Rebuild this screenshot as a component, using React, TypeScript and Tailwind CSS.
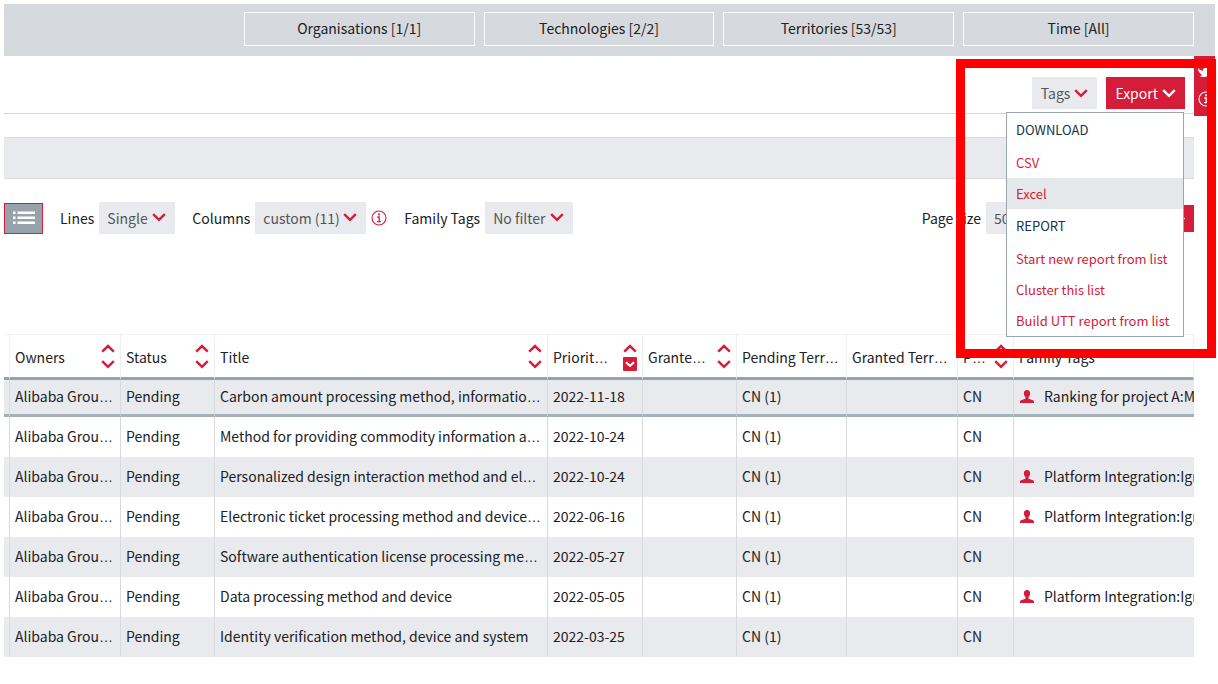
import type { ReactNode } from "react";
import { clsx } from "clsx";

const filters = ["Organisations [1/1]", "Technologies [2/2]", "Territories [53/53]", "Time [All]"];

const menuGroups = [
  { title: "DOWNLOAD", items: ["CSV", "Excel"] },
  { title: "REPORT", items: ["Start new report from list", "Cluster this list", "Build UTT report from list"] },
];

type Sort = "none" | "both" | "desc";

const columns: { label: string; width: string; sort: Sort }[] = [
  { label: "Owners", width: "w-[111px]", sort: "both" },
  { label: "Status", width: "w-[94px]", sort: "both" },
  { label: "Title", width: "", sort: "both" },
  { label: "Priorit…", width: "w-[95px]", sort: "desc" },
  { label: "Grante…", width: "w-[94px]", sort: "both" },
  { label: "Pending Terr…", width: "w-[110px]", sort: "none" },
  { label: "Granted Terr…", width: "w-[111px]", sort: "none" },
  { label: "P…", width: "w-[56px]", sort: "both" },
  { label: "Family Tags", width: "w-[180px]", sort: "none" },
];

const patents = [
  { title: "Carbon amount processing method, informatio…", date: "2022-11-18", tag: "Ranking for project A:M" },
  { title: "Method for providing commodity information a…", date: "2022-10-24", tag: "" },
  { title: "Personalized design interaction method and el…", date: "2022-10-24", tag: "Platform Integration:Ign" },
  { title: "Electronic ticket processing method and device…", date: "2022-06-16", tag: "Platform Integration:Ign" },
  { title: "Software authentication license processing me…", date: "2022-05-27", tag: "" },
  { title: "Data processing method and device", date: "2022-05-05", tag: "Platform Integration:Ign" },
  { title: "Identity verification method, device and system", date: "2022-03-25", tag: "" },
];

// The CJK face centres its ellipsis, so the dots are set in a Latin face
function ShortText({ text }: { text: string }) {
  if (!text.endsWith("…")) return <>{text}</>;
  return (
    <>
      {text.slice(0, -1)}
      <span className="font-['Liberation_Sans',sans-serif]">…</span>
    </>
  );
}

function Chevron({ className }: { className?: string }) {
  return (
    <svg viewBox="0 0 14 9" className={clsx("h-[9px] w-[14px]", className)} fill="none" stroke="currentColor" strokeWidth="2.4" aria-hidden>
      <path d="M1.2 1.2 7 6.900l5.800-5.700" />
    </svg>
  );
}

function InfoIcon({ className }: { className?: string }) {
  return (
    <svg viewBox="0 0 16 16" className={clsx("h-4 w-4 shrink-0", className)} fill="none" stroke="currentColor" aria-hidden>
      <circle cx="8" cy="8" r="7" strokeWidth="1.1" />
      <circle cx="8" cy="4.3" r="1.1" fill="currentColor" stroke="none" />
      <path d="M6.3 7h1.900v4.600M6.100 11.700h4" strokeWidth="1.3" />
    </svg>
  );
}

function PersonIcon() {
  return (
    <svg viewBox="0 0 14 13" className="h-[13px] w-[14px] shrink-0 text-[#d51c38]" fill="currentColor" aria-hidden>
      <path d="M7 0c2.1 0 3.2 1.5 3.1 3.4C10 5.2 9.3 6.3 8.5 7v1.2c.2.7 1 1 2.300 1.400 1.900.5 3.200.9 3.200 2.400v1H0v-1c0-1.500 1.300-1.900 3.200-2.400C4.500 9.200 5.300 8.900 5.500 8.200V7C4.700 6.300 4 5.200 3.900 3.400 3.800 1.500 4.900 0 7 0Z" />
    </svg>
  );
}

function SortIcon({ sort }: { sort: Sort }) {
  return (
    <svg viewBox="0 0 14 27" className="h-[27px] w-[14px] text-[#d51c38]" fill="none" stroke="currentColor" strokeWidth="2.5" aria-hidden>
      <path d="M1.2 7.600 7 2l5.800 5.600" />
      {sort === "desc" ? (
        <>
          <rect x="0" y="13" width="14" height="14" rx="1" fill="currentColor" stroke="none" />
          <path d="M3 18.200l4 3.600 4-3.600" stroke="white" strokeWidth="2.2" />
        </>
      ) : (
        <path d="M1.2 17.200 7 22.800l5.800-5.600" />
      )}
    </svg>
  );
}

function SelectField({ id, label, value, width }: { id: string; label: string; value: string; width: string }) {
  return (
    <div className="flex items-center gap-[5px]">
      <label htmlFor={id} className="whitespace-nowrap">{label}</label>
      <div className="relative">
        <select id={id} className={clsx("h-8 appearance-none bg-[#e9eaee] pl-2 text-[#555]", width)}>
          <option>{value}</option>
        </select>
        <Chevron className="pointer-events-none absolute top-[11px] right-[9px] text-[#d51c38]" />
      </div>
    </div>
  );
}

function Cell({ children }: { children?: ReactNode }) {
  return (
    <td className="overflow-hidden border-r border-[#d9dbe0] px-[5px] pb-0.5 whitespace-nowrap last:border-r-0 last:pr-0">
      {children}
    </td>
  );
}

function ExportMenu() {
  return (
    <div className="relative">
      <button className="flex h-8 items-center gap-1 bg-[#d51c38] px-[9px] text-white">
        Export
        <Chevron />
      </button>
      <div className="absolute top-full right-px z-10 mt-[3px] w-[178px] border border-[#9aa5b0] bg-white text-[13px]">
        {menuGroups.map((group) => (
          <div key={group.title}>
            <p className="px-[9px] leading-[34px] text-[#17324d]">{group.title}</p>
            {group.items.map((item) => (
              <a
                key={item}
                href="#"
                className={clsx("block px-[9px] leading-[31px] whitespace-nowrap text-[#d51c38]", item === "Excel" && "bg-[#e5e8eb]")}
              >
                {item}
              </a>
            ))}
          </div>
        ))}
      </div>
    </div>
  );
}

function Toolbar() {
  return (
    <div className="mt-[23px] flex h-8 items-center">
      <button aria-label="List view" className="flex h-[31px] w-[39px] items-center justify-center border border-[#d51c38] bg-[#98a2ac] text-white">
        <svg viewBox="0 0 22 14" className="h-[14px] w-[22px]" fill="currentColor" aria-hidden>
          <path d="M0 .5h2.500v2.500H0zM4.500.5H22v2.500H4.500zM0 5.500h2.500V8H0zM4.500 5.500H22V8H4.500zM0 10.500h2.500V13H0zM4.500 10.500H22V13H4.500z" />
        </svg>
      </button>
      <div className="ml-[17px] flex items-center gap-[17px]">
        <SelectField id="lines" label="Lines" value="Single" width="w-[76px]" />
        <div className="flex items-center gap-[5px]">
          <SelectField id="columns" label="Columns" value="custom (11)" width="w-[111px]" />
          <InfoIcon className="text-[#d51c38]" />
        </div>
        <SelectField id="family-tags" label="Family Tags" value="No filter" width="w-[88px]" />
      </div>
      <div className="ml-auto flex items-center gap-[90px]">
        <SelectField id="page-size" label="Page size" value="50" width="w-[60px]" />
        <button aria-label="Next page" className="flex h-[27px] w-[58px] items-center justify-end bg-[#d51c38] pr-1.5 text-white">
          <Chevron className="-rotate-90" />
        </button>
      </div>
    </div>
  );
}

function ResultsTable() {
  return (
    <table className="mt-[100px] w-full table-fixed border-separate border-spacing-0">
      <colgroup>
        <col className="w-[6px]" />
        {columns.map((column) => (
          <col key={column.label} className={column.width} />
        ))}
      </colgroup>
      <thead>
        <tr className="h-[46px] *:border-t *:border-b-[3px] *:border-t-[#f3f3f5] *:border-b-[#98a2ac]">
          <th aria-label="Selection" className="border-r border-r-[#eeeff2]" />
          {columns.map((column) => (
            <th key={column.label} className="border-r border-r-[#eeeff2] px-[5px] pt-0.5 text-left font-normal whitespace-nowrap">
              <div className="flex items-center justify-between">
                <span>
                  <ShortText text={column.label} />
                </span>
                {column.sort !== "none" && (
                  <button aria-label={`Sort by ${column.label}`} className="shrink-0">
                    <SortIcon sort={column.sort} />
                  </button>
                )}
              </div>
            </th>
          ))}
        </tr>
      </thead>
      <tbody>
        {patents.map((patent, index) => (
          <tr
            key={patent.title}
            className={clsx(
              index === 0 ? "h-[37px] *:border-b-[3px] *:border-b-[#a6b0ba]" : "h-10",
              index % 2 === 0 && "bg-[#e9eaee]",
            )}
          >
            <td className="border-r border-[#d9dbe0]" />
            <Cell>
              <ShortText text="Alibaba Grou…" />
            </Cell>
            <Cell>Pending</Cell>
            <Cell>
              <ShortText text={patent.title} />
            </Cell>
            <Cell>{patent.date}</Cell>
            <Cell />
            <Cell>CN (1)</Cell>
            <Cell />
            <Cell>CN</Cell>
            <Cell>
              {patent.tag && (
                <span className="flex items-center gap-[10px] pl-px">
                  <PersonIcon />
                  {patent.tag}
                </span>
              )}
            </Cell>
          </tr>
        ))}
      </tbody>
    </table>
  );
}

export default function App() {
  return (
    <div className="min-h-screen overflow-hidden bg-white py-1 pr-[3px] pl-1 font-['Noto_Sans_CJK_SC',sans-serif] text-[14px] leading-5 text-[#202124]">
      <div className="relative">
        <header className="grid grid-cols-5 gap-[9px] bg-[#d6dade] pt-2 pr-[21px] pb-[10px]">
          {filters.map((filter) => (
            <button key={filter} className="h-[34px] border border-white pb-0.5 first:col-start-2">
              {filter}
            </button>
          ))}
        </header>

        <main className="pr-[21px]">
          <div className="flex h-[58px] items-start justify-end gap-[9px] border-b border-[#d5d7db] pt-[21px] pr-[9px]">
            <button className="flex h-8 items-center gap-1 bg-[#e9eaee] px-[9px] text-[#555]">
              Tags
              <Chevron className="text-[#d51c38]" />
            </button>
            <ExportMenu />
          </div>
          <div className="mt-[23px] h-[42px] border-y border-[#d9dbe0] bg-[#e9eaee]" />
          <Toolbar />
          <ResultsTable />
        </main>

        <aside className="absolute top-[52px] right-0 flex h-[60px] w-[21px] flex-col gap-3.5 overflow-hidden bg-[#d51c38] pt-[11px] pl-1 text-white">
          <svg viewBox="0 0 12 10" className="h-[10px] w-3 shrink-0" fill="currentColor" aria-hidden>
            <path d="M0 1c1.500 1.800 3 2.600 5 2.700C5 1.500 6.500 0 8.400 0c1 0 1.800.4 2.400 1L12 .6v8C10 9.500 8 10 6 10 3.800 10 2.500 9.700 1.500 9c1.200 0 2.200-.3 3-1-1.200-.2-1.900-.8-2.200-1.700C1 5.600.2 4 0 1Z" />
          </svg>
          <InfoIcon />
        </aside>

        {/* Highlight frame around the export menu */}
        <div className="pointer-events-none absolute top-[55px] -right-px z-20 h-[299px] w-[260px] border-[9px] border-[#ff0000]" />
      </div>
    </div>
  );
}
